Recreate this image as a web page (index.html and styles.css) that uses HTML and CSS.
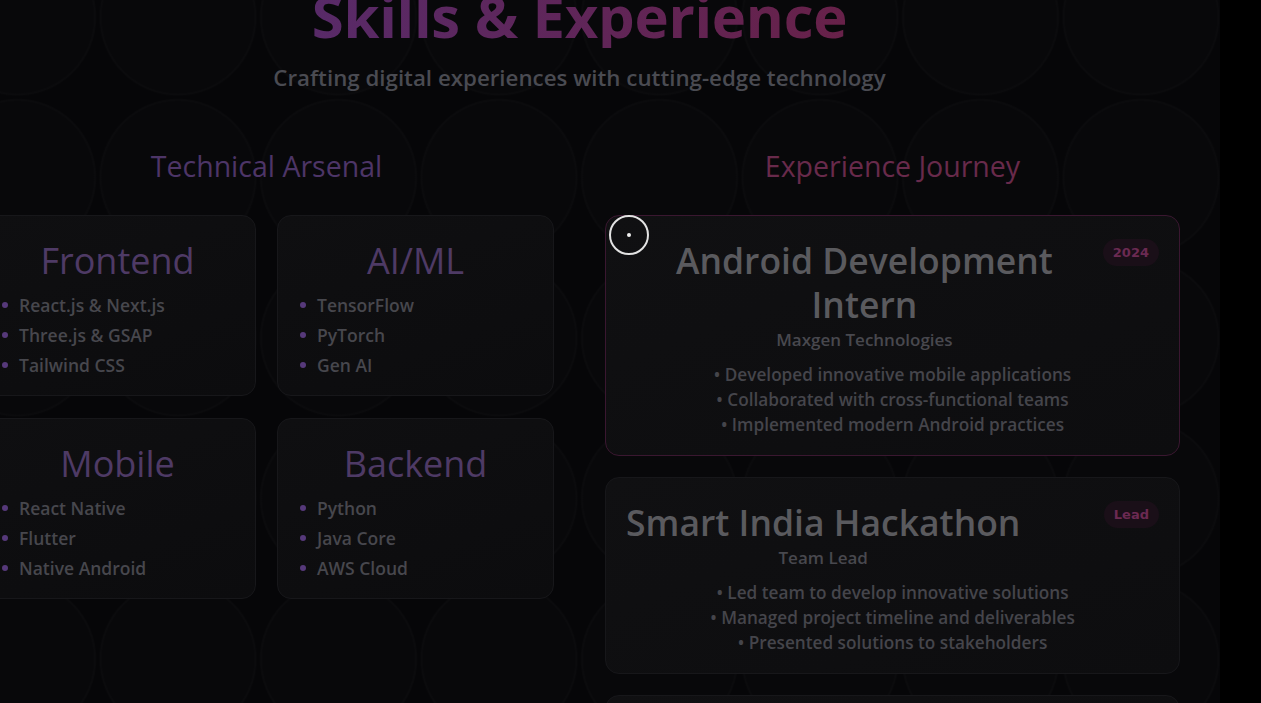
FILE: index.html
```html
<!DOCTYPE html>
<html lang="en">
<head>
<meta charset="utf-8">
<title>Skills &amp; Experience</title>
<link rel="stylesheet" href="styles.css">
</head>
<body>
<div class="page">
  <main class="content">
    <header class="hero">
      <h1 class="hero-title">Skills &amp; Experience</h1>
      <p class="hero-sub">Crafting digital experiences with cutting-edge technology</p>
    </header>
    <div class="columns">
      <section class="col">
        <h2 class="col-title col-title--skills">Technical Arsenal</h2>
        <div class="skill-grid">
          <article class="skill-card">
            <h3 class="skill-name">Frontend</h3>
            <ul class="skill-list">
              <li>React.js &amp; Next.js</li>
              <li>Three.js &amp; GSAP</li>
              <li>Tailwind CSS</li>
            </ul>
          </article>
          <article class="skill-card">
            <h3 class="skill-name">AI/ML</h3>
            <ul class="skill-list">
              <li>TensorFlow</li>
              <li>PyTorch</li>
              <li>Gen AI</li>
            </ul>
          </article>
          <article class="skill-card">
            <h3 class="skill-name">Mobile</h3>
            <ul class="skill-list">
              <li>React Native</li>
              <li>Flutter</li>
              <li>Native Android</li>
            </ul>
          </article>
          <article class="skill-card">
            <h3 class="skill-name">Backend</h3>
            <ul class="skill-list">
              <li>Python</li>
              <li>Java Core</li>
              <li>AWS Cloud</li>
            </ul>
          </article>
        </div>
      </section>
      <section class="col">
        <h2 class="col-title col-title--exp">Experience Journey</h2>
        <div class="exp-list">
          <article class="exp-card exp-card--active">
            <div class="exp-head">
              <div class="exp-heading">
                <h3 class="exp-role">Android Development Intern</h3>
                <p class="exp-org">Maxgen Technologies</p>
              </div>
              <span class="exp-badge">2024</span>
            </div>
            <ul class="exp-points">
              <li>• Developed innovative mobile applications</li>
              <li>• Collaborated with cross-functional teams</li>
              <li>• Implemented modern Android practices</li>
            </ul>
          </article>
          <article class="exp-card">
            <div class="exp-head">
              <div class="exp-heading">
                <h3 class="exp-role">Smart India Hackathon</h3>
                <p class="exp-org">Team Lead</p>
              </div>
              <span class="exp-badge">Lead</span>
            </div>
            <ul class="exp-points">
              <li>• Led team to develop innovative solutions</li>
              <li>• Managed project timeline and deliverables</li>
              <li>• Presented solutions to stakeholders</li>
            </ul>
          </article>
          <article class="exp-card exp-card--stub"></article>
        </div>
      </section>
    </div>
  </main>
  <div class="cursor"><span class="cursor-dot"></span></div>
</div>
</body>
</html>
```

FILE: styles.css
```css
* { box-sizing: border-box; }

html, body {
  margin: 0;
  padding: 0;
  background: #000;
  overflow: hidden;
  height: 703px;
}

body {
  font-family: "Open Sans", "Noto Sans", sans-serif;
}

.page {
  position: relative;
  width: 1220px;
  height: 703px;
  overflow: hidden;
  background-color: #060608;
  background-image: radial-gradient(circle at center, #08080a 0, #08080a 76px, #0b0b0d 77px, #0b0b0d 78px, transparent 79px);
  background-size: 160.5px 160.5px;
  background-position: -62.75px -63.25px;
}

.content {
  width: 1201px;
  margin-left: -21px;
  display: flex;
  flex-direction: column;
  align-items: center;
}

.hero {
  display: flex;
  flex-direction: column;
  align-items: center;
  margin-top: -16px;
}

.hero-title {
  margin: 0;
  font-size: 58px;
  line-height: 64px;
  font-weight: 700;
  background: linear-gradient(90deg, #582a68 0%, #672149 100%);
  -webkit-background-clip: text;
  background-clip: text;
  color: transparent;
  letter-spacing: -0.3px;
}

.hero-sub {
  margin: 15px 0 0;
  font-size: 22.3px;
  line-height: 30px;
  font-weight: 600;
  color: #4a4b52;
}

.columns {
  width: 100%;
  display: grid;
  grid-template-columns: 575px 575px;
  column-gap: 51px;
  margin-top: 55px;
}

.col {
  display: flex;
  flex-direction: column;
}

.col-title {
  margin: 0 0 31px;
  text-align: center;
  font-size: 28.5px;
  line-height: 36px;
  font-weight: 500;
}

.col-title--skills { color: #4d3567; }
.col-title--exp { color: #682a4b; }

.skill-grid {
  display: grid;
  grid-template-columns: 277px 277px;
  column-gap: 21px;
  row-gap: 22px;
}

.skill-card {
  height: 181px;
  border: 1px solid #17171a;
  border-radius: 14px;
  background: linear-gradient(160deg, #0f0f11 0%, #0c0c0e 100%);
  padding: 22px 22px 18px;
  display: flex;
  flex-direction: column;
}

.skill-name {
  margin: 0 0 9px;
  text-align: center;
  font-size: 36px;
  line-height: 46px;
  font-weight: 500;
  color: #4e3a65;
}

.skill-list {
  list-style: none;
  margin: 0;
  padding: 0;
  display: flex;
  flex-direction: column;
  gap: 6px;
}

.skill-list li {
  display: flex;
  align-items: center;
  gap: 11px;
  font-size: 17.5px;
  line-height: 24px;
  font-weight: 600;
  color: #47474d;
}

.skill-list li::before {
  content: "";
  width: 6px;
  height: 6px;
  border-radius: 50%;
  background: #56397a;
  flex: none;
}

.exp-list {
  display: flex;
  flex-direction: column;
  gap: 21px;
}

.exp-card {
  border: 1px solid #17171a;
  border-radius: 14px;
  background: linear-gradient(160deg, #101012 0%, #0d0d0f 100%);
  padding: 22px 20px 18px;
}

.exp-card--active {
  border-color: #3a1730;
}

.exp-card--stub {
  height: 120px;
}

.exp-head {
  display: flex;
  justify-content: space-between;
  align-items: flex-start;
}

.exp-heading {
  text-align: center;
}

.exp-role {
  margin: 0;
  font-size: 35.5px;
  line-height: 44px;
  font-weight: 600;
  color: #5a5a5e;
}

.exp-org {
  margin: 2px 0 0;
  font-size: 17px;
  line-height: 24px;
  font-weight: 600;
  color: #48484e;
}

.exp-badge {
  flex: none;
  margin-top: 1px;
  padding: 5px 10px;
  border-radius: 999px;
  background: #1a0f18;
  color: #6b2a52;
  font-family: "DejaVu Sans", sans-serif;
  font-size: 13px;
  line-height: 17px;
  font-weight: 700;
}

.exp-points {
  list-style: none;
  margin: 10px 0 0;
  padding: 0;
  text-align: center;
}

.exp-points li {
  font-size: 17.2px;
  line-height: 25px;
  font-weight: 600;
  color: #45454b;
}

.cursor {
  position: absolute;
  left: 609px;
  top: 215px;
  width: 40px;
  height: 40px;
  border: 2px solid #e2e2e2;
  border-radius: 50%;
  display: flex;
  align-items: center;
  justify-content: center;
}

.cursor-dot {
  width: 4px;
  height: 4px;
  border-radius: 50%;
  background: #f0f0f0;
}
```
